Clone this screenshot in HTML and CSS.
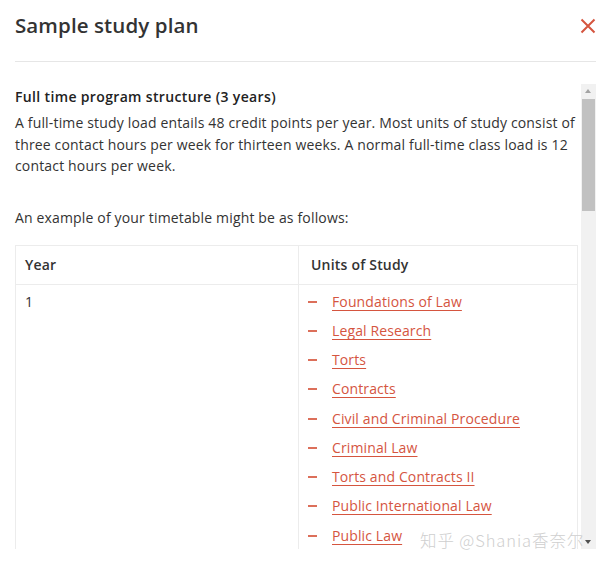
FILE: index.html
```html
<!DOCTYPE html>
<html>
<head>
<meta charset="utf-8">
<link rel="stylesheet" href="styles.css">
</head>
<body>
<div class="modal">
  <header class="modal-head">
    <h1 class="modal-title">Sample study plan</h1>
    <button class="close" aria-label="Close">
      <svg width="16" height="16" viewBox="0 0 16 16"><path d="M1.5 1.5 L14.5 14.5 M14.5 1.5 L1.5 14.5" stroke="#d5553f" stroke-width="2" fill="none"/></svg>
    </button>
  </header>
  <div class="divider"></div>
  <div class="body">
    <div class="scroll">
      <h2 class="sub">Full time program structure (3 years)</h2>
      <p class="para">A full-time study load entails 48 credit points per year. Most units of study consist of three contact hours per week for thirteen weeks. A normal full-time class load is 12 contact hours per week.</p>
      <p class="para gap">An example of your timetable might be as follows:</p>
      <div class="table">
        <div class="row head">
          <div class="cell">Year</div>
          <div class="cell">Units of Study</div>
        </div>
        <div class="row">
          <div class="cell">1</div>
          <div class="cell">
            <ul class="units">
              <li><span class="dash"></span><a href="#">Foundations of Law</a></li>
              <li><span class="dash"></span><a href="#">Legal Research</a></li>
              <li><span class="dash"></span><a href="#">Torts</a></li>
              <li><span class="dash"></span><a href="#">Contracts</a></li>
              <li><span class="dash"></span><a href="#">Civil and Criminal Procedure</a></li>
              <li><span class="dash"></span><a href="#">Criminal Law</a></li>
              <li><span class="dash"></span><a href="#">Torts and Contracts II</a></li>
              <li><span class="dash"></span><a href="#">Public International Law</a></li>
              <li><span class="dash"></span><a href="#">Public Law</a></li>
            </ul>
          </div>
        </div>
      </div>
    </div>
    <div class="scrollbar">
      <div class="arrow up"></div>
      <div class="track"><div class="thumb"></div></div>
      <div class="arrow down"></div>
    </div>
  </div>
  <div class="watermark">知乎 @Shania香奈尔</div>
</div>
</body>
</html>
```
FILE: styles.css
```css
* { box-sizing: border-box; }
html, body { margin: 0; padding: 0; background: #fff; }
body { font-family: "Open Sans", "Noto Sans", sans-serif; color: #333; }
.modal { position: relative; width: 600px; height: 564px; }
.modal-head {
  display: flex; align-items: center; justify-content: space-between;
  height: 61px; padding: 0 4px 12px 15px;
}
.modal-title { margin: 0; font-size: 20.5px; font-weight: 600; color: #333; letter-spacing: 0.1px; }
.close { border: 0; background: none; padding: 0; width: 16px; height: 16px; display: block; margin-top: 2px; }
.close svg { display: block; }
.divider { height: 1px; background: #e6e6e6; margin: 0 4px 0 15px; }
.body { display: flex; height: 465px; margin-top: 22px; }
.scroll { width: 578px; padding-left: 15px; overflow: hidden; }
.sub { margin: 3px 0 5px; font-size: 14px; font-weight: 600; line-height: 20px; color: #222; letter-spacing: 0.35px; }
.para { margin: 0; font-size: 14px; line-height: 21.5px; color: #333; letter-spacing: 0.16px; }
.gap { margin-top: 30px; }
.table { margin-top: 17px; border: 1px solid #ececec; border-bottom: 0; width: 563px; }
.row { display: grid; grid-template-columns: 282px 1fr; }
.row.head { border-bottom: 1px solid #ececec; height: 39px; }
.cell { padding: 0 9px; font-size: 14px; line-height: 20px; }
.cell + .cell { border-left: 1px solid #ececec; padding-left: 12px; }
.head .cell { font-weight: 600; color: #333; padding-top: 9px; letter-spacing: 0.2px; }
.row:not(.head) .cell { padding-top: 7px; }
.units { list-style: none; margin: -5px 0 0; padding: 0; }
.units li { display: flex; align-items: center; height: 29.25px; }
.dash { flex: none; width: 9px; height: 2px; background: #dc6f5a; margin: 0 15px 0 -3px; }
.units a { color: #d5553f; line-height: 20px; letter-spacing: 0.12px; text-decoration: underline; text-underline-offset: 3px; text-decoration-thickness: 1px; }
.scrollbar { width: 15px; margin-left: 3px; display: flex; flex-direction: column; background: #f1f1f1; }
.arrow { height: 15px; position: relative; }
.arrow.up::after { content: ""; position: absolute; left: 4px; top: 5px; border: 3.5px solid transparent; border-bottom: 4px solid #a3a3a3; border-top: 0; }
.arrow.down::after { content: ""; position: absolute; left: 4px; top: 6px; border: 3.5px solid transparent; border-top: 4px solid #505050; border-bottom: 0; }
.track { flex: 1; padding: 0 1px; }
.thumb { height: 112px; background: #c1c1c1; }
.watermark { position: absolute; left: 420px; top: 528px; font-family: "Noto Sans CJK SC", "Noto Sans", sans-serif; font-size: 16.5px; font-weight: 300; color: #cfcfcf; letter-spacing: 0.9px; }
```
